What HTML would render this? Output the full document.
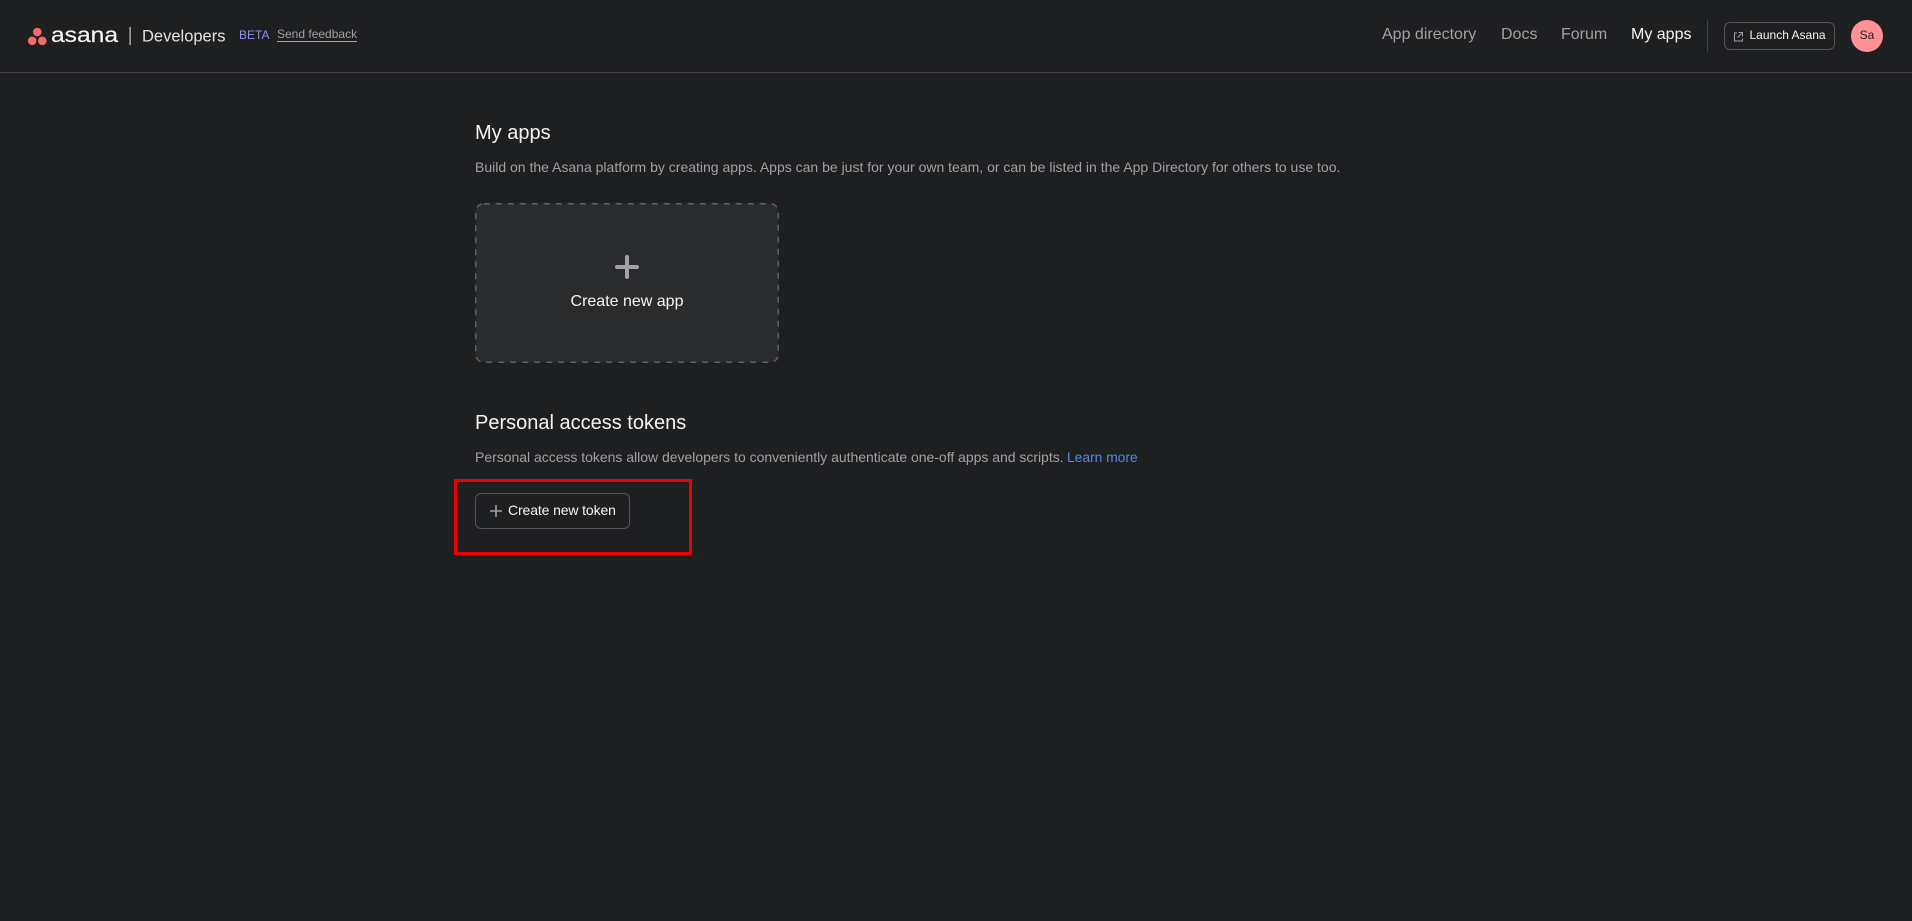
<!DOCTYPE html>
<html lang="en">
<head>
<meta charset="utf-8">
<title>Asana Developers</title>
<style>
html,body{margin:0;padding:0;width:1912px;height:921px;background:#1e1f21;overflow:hidden;font-family:"Liberation Sans",Arial,sans-serif;color:#f5f4f3}
.a{position:absolute;white-space:nowrap}
a{color:inherit;text-decoration:none}
</style>
</head>
<body>
<div class="a" style="left:0;top:72px;width:1912px;height:1px;background:#424244"></div>

<svg class="a" style="left:0;top:0" width="240" height="72" viewBox="0 0 240 72">
<circle cx="37.3" cy="32" r="4.3" fill="#f06a6a"/>
<circle cx="32.2" cy="40.8" r="4.3" fill="#f06a6a"/>
<circle cx="42.3" cy="40.8" r="4.3" fill="#f06a6a"/>
<text x="51" y="42" font-family="'Liberation Sans',sans-serif" font-size="21" fill="#f5f4f3" stroke="#f5f4f3" stroke-width="0.2" textLength="67" lengthAdjust="spacingAndGlyphs">asana</text>
<rect x="129.5" y="27" width="1.2" height="18" fill="#c9c9ca"/>
<text x="142" y="41.5" font-family="'Liberation Sans',sans-serif" font-size="16.5" fill="#e2e2e2" textLength="83.5" lengthAdjust="spacingAndGlyphs">Developers</text>
</svg>

<div class="a" style="left:239px;top:28px;font-size:12px;line-height:14px;color:#8f8fe8">BETA</div>
<a class="a" href="#" style="left:277px;top:28px;font-size:12px;line-height:13px;color:#a2a0a2;border-bottom:1px solid #a2a0a2">Send feedback</a>

<a class="a" href="#" style="left:1382px;top:25px;font-size:16px;line-height:20px;color:#a2a0a2">App directory</a>
<a class="a" href="#" style="left:1501px;top:25px;font-size:16px;line-height:20px;color:#a2a0a2">Docs</a>
<a class="a" href="#" style="left:1561px;top:25px;font-size:16px;line-height:20px;color:#a2a0a2">Forum</a>
<a class="a" href="#" style="left:1631px;top:25px;font-size:16px;line-height:20px;color:#f5f4f3">My apps</a>

<div class="a" style="left:1707px;top:20px;width:1px;height:32px;background:#424244"></div>

<div class="a" style="left:1724px;top:22px;width:109px;height:26px;border:1px solid #565557;border-radius:6px"></div>
<svg class="a" style="left:1733px;top:31px" width="11" height="11" viewBox="0 0 11 11" fill="none" stroke="#a2a0a2" stroke-width="1">
<path d="M4 2H1.5V10H9.5V7.5"/>
<path d="M4.5 6.5L8.5 2.5M5.5 1.5H9.5V5.5"/>
</svg>
<div class="a" style="left:1749.5px;top:27px;font-size:12px;line-height:16px;color:#f5f4f3">Launch Asana</div>

<div class="a" style="left:1851px;top:20px;width:32px;height:32px;border-radius:50%;background:#ff9295;color:#1e1f21;font-size:12px;line-height:30px;text-align:center">Sa</div>

<div class="a" style="left:475px;top:121px;font-size:20px;line-height:24px;color:#f5f4f3">My apps</div>
<div class="a" style="left:475px;top:158px;font-size:14px;line-height:18px;color:#a2a0a2">Build on the Asana platform by creating apps. Apps can be just for your own team, or can be listed in the App Directory for others to use too.</div>

<svg class="a" style="left:475px;top:203px" width="305" height="161" viewBox="0 0 305 161">
<rect x="0.75" y="0.75" width="302.5" height="158.5" rx="8" fill="#2a2b2d" stroke="#5f6061" stroke-width="1.5" stroke-dasharray="6 6"/>
<path d="M152 54V74M142 64H162" stroke="#a2a0a2" stroke-width="4" stroke-linecap="round" fill="none"/>
</svg>
<div class="a" style="left:475px;top:292px;width:304px;text-align:center;font-size:16px;line-height:20px;color:#f5f4f3">Create new app</div>

<div class="a" style="left:475px;top:411px;font-size:20px;line-height:24px;color:#f5f4f3">Personal access tokens</div>
<div class="a" style="left:475px;top:448px;font-size:14px;line-height:18px;color:#a2a0a2;letter-spacing:-0.02px">Personal access tokens allow developers to conveniently authenticate one-off apps and scripts.</div>
<a class="a" href="#" style="left:1067px;top:448px;font-size:14px;line-height:18px;color:#5488e0;letter-spacing:-0.1px">Learn more</a>

<div class="a" style="left:475px;top:493px;width:153px;height:34px;border:1px solid #565557;border-radius:6px"></div>
<svg class="a" style="left:489px;top:504px" width="14" height="14" viewBox="0 0 14 14">
<path d="M7 1V13M1 7H13" stroke="#a2a0a2" stroke-width="1.6" fill="none"/>
</svg>
<div class="a" style="left:508px;top:501px;font-size:14px;line-height:18px;color:#f5f4f3;letter-spacing:-0.12px">Create new token</div>

<div class="a" style="left:454px;top:479px;width:232px;height:70px;border:3px solid #ee0000"></div>
</body>
</html>
